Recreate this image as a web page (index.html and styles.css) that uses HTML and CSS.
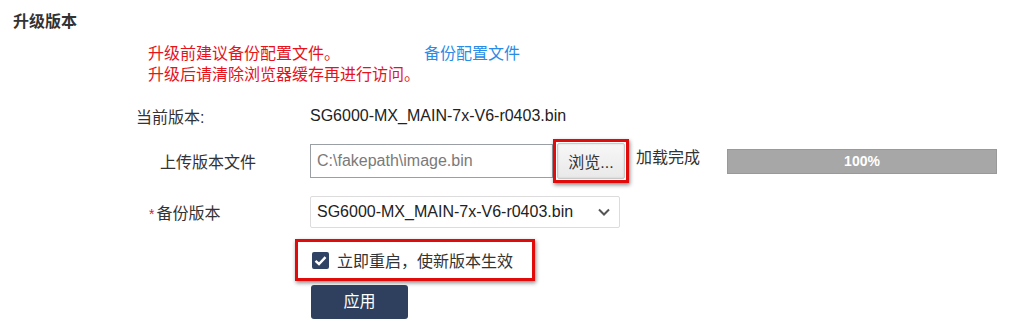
FILE: index.html
```html
<!DOCTYPE html>
<html lang="zh">
<head>
<meta charset="utf-8">
<title>升级版本</title>
<link rel="stylesheet" href="styles.css">
</head>
<body>
<div class="page">
  <div class="title">升级版本</div>
  <div class="notice">
    <div class="notice-line">
      <span class="warn warn-first">升级前建议备份配置文件。</span>
      <a class="link" href="#">备份配置文件</a>
    </div>
    <div class="notice-line">
      <span class="warn">升级后请清除浏览器缓存再进行访问。</span>
    </div>
  </div>

  <div class="row row-current">
    <div class="label label-current">当前版本:</div>
    <div class="value">SG6000-MX_MAIN-7x-V6-r0403.bin</div>
  </div>

  <div class="row row-upload">
    <div class="label label-upload">上传版本文件</div>
    <div class="file-input">C:\fakepath\image.bin</div>
    <span class="mark mark-browse"><span class="browse-btn">浏览...</span></span>
    <span class="status">加载完成</span>
    <div class="progress"><div class="progress-fill" style="width:100%">100%</div></div>
  </div>

  <div class="row row-backup">
    <div class="label label-backup"><span class="req">*</span>备份版本</div>
    <div class="select">
      <span class="select-text">SG6000-MX_MAIN-7x-V6-r0403.bin</span>
      <svg class="chevron" width="14" height="10" viewBox="0 0 14 10"><path d="M2 2.5 L7 7.5 L12 2.5" fill="none" stroke="#555" stroke-width="2"/></svg>
    </div>
  </div>

  <div class="row row-check">
    <span class="mark mark-check">
      <span class="checkbox"><svg width="17" height="17" viewBox="0 0 17 17"><path d="M3.5 8.8 L7 12 L13.5 5.2" fill="none" stroke="#fff" stroke-width="2.4"/></svg></span>
      <span class="check-text">立即重启，使新版本生效</span>
    </span>
  </div>

  <div class="row row-apply">
    <span class="apply-btn">应用</span>
  </div>
</div>
</body>
</html>
```
FILE: styles.css
```css
* { box-sizing: border-box; }
html, body { margin: 0; padding: 0; background: #fff; }
body {
  font-family: "Liberation Sans", "Noto Sans CJK SC", sans-serif;
  font-size: 16px;
  color: #333;
}
.page { width: 1034px; height: 336px; overflow: hidden; }
.title {
  padding: 12px 0 0 13px;
  font-size: 16px;
  line-height: 20px;
  font-weight: bold;
  color: #333;
}
.notice { margin: 11px 0 0 148px; }
.notice-line { display: flex; line-height: 21px; height: 21px; }
.warn { color: #e5141c; }
.warn-first { width: 276px; }
.link { color: #2a8be6; text-decoration: none; }

.row { display: flex; align-items: center; }
.label { width: 310px; flex: none; color: #333; }
.label-current { padding-left: 136px; }
.label-upload { padding-left: 160px; }
.label-backup { padding-left: 149px; }
.req { color: #e5141c; margin-right: 2px; font-size: 14px; }

.row-current { margin-top: 15px; height: 32px; }
.value { color: #222; }

.row-upload { margin-top: 7px; height: 44px; }
.file-input {
  width: 243px;
  height: 34px;
  border: 1px solid #9a9fa6;
  padding-left: 6px;
  line-height: 32px;
  color: #7a7a7a;
}
.mark {
  border: 3px solid #e10b0b;
  box-shadow: 1px 2px 4px rgba(0,0,0,0.45);
}
.mark-browse { padding: 1px; display: flex; }
.browse-btn {
  width: 68px;
  height: 36px;
  border: 1px solid #c9c9c9;
  border-radius: 2px;
  background: linear-gradient(#f7f7f7, #e9e9e9);
  box-shadow: inset 0 0 2px rgba(0,0,0,0.15);
  text-align: center;
  line-height: 38px;
  color: #333;
  font-size: 16px;
}
.status { margin-left: 7px; align-self: flex-start; margin-top: 5px; color: #333; }
.progress {
  margin-left: 27px;
  width: 270px;
  height: 25px;
  border: 1px solid #999;
  background: #fff;
}
.progress-fill {
  height: 100%;
  background: #a7a7a7;
  color: #fff;
  font-weight: bold;
  font-size: 14px;
  text-align: center;
  line-height: 23px;
}

.row-backup { margin-top: 13px; height: 32px; }
.select {
  width: 310px;
  height: 32px;
  border: 1px solid #dcdcdc;
  border-radius: 2px;
  display: flex;
  align-items: center;
  justify-content: space-between;
  padding: 0 8px 0 6px;
  color: #222;
}
.chevron { display: block; }

.row-check { margin-top: 11px; height: 42px; padding-left: 295px; }
.mark-check {
  display: flex;
  align-items: center;
  width: 240px;
  height: 42px;
  padding-left: 14px;
}
.checkbox {
  width: 17px;
  height: 17px;
  background: #2f4464;
  border-radius: 2px;
  display: block;
}
.checkbox svg { display: block; }
.check-text { margin-left: 8px; color: #333; }

.row-apply { margin-top: 4px; padding-left: 311px; }
.apply-btn {
  width: 97px;
  height: 34px;
  background: #2e405e;
  border-radius: 3px;
  color: #fff;
  text-align: center;
  line-height: 34px;
  font-size: 16px;
}
```
